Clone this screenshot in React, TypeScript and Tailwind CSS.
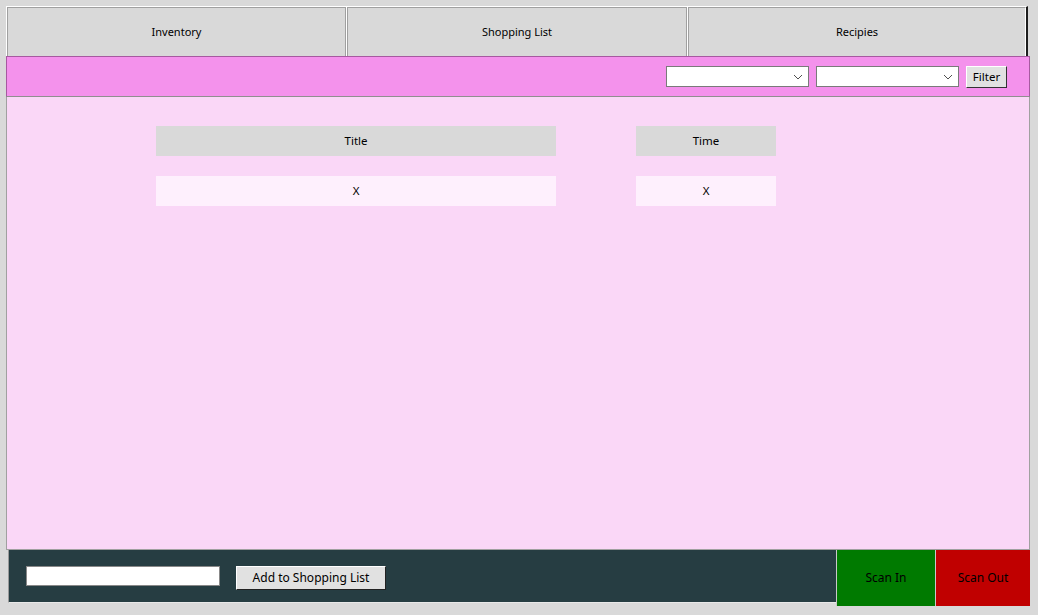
import React from 'react';

const font = { fontFamily: '"Noto Sans", "Open Sans", sans-serif' };

const Tab: React.FC<{ label: string; width: string; last?: boolean }> = ({ label, width, last }) => (
  <div className={`${width} h-full border-l border-t border-white ${last ? 'border-r-2 border-r-[#1e1e1e]' : ''}`}>
    <div className={`h-full border-l border-t border-[#a0a0a0] ${last ? 'border-r border-r-white' : 'border-r border-r-[#a0a0a0]'} bg-[#d9d9d9] flex items-center justify-center text-[11px] text-black pt-[1px]`}>
      {label}
    </div>
  </div>
);

const Select: React.FC = () => (
  <div className="w-[143px] h-[21px] bg-white border border-[#7a7a7a] flex items-center justify-end pr-[5px]">
    <svg width="10" height="6" viewBox="0 0 10 6" fill="none">
      <path d="M1 1 L5 5 L9 1" stroke="#505050" strokeWidth="1" />
    </svg>
  </div>
);

export default function App() {
  return (
    <div className="w-[1038px] h-[615px] bg-[#d9d9d9] pt-[6px] pl-[6px] overflow-hidden" style={font}>
      {/* tabs */}
      <div className="flex h-[50px]">
        <Tab label="Inventory" width="w-[340px]" />
        <Tab label="Shopping List" width="w-[341px]" />
        <Tab label="Recipies" width="w-[341px]" last />
      </div>

      {/* filter bar */}
      <div className="w-[1024px] h-[41px] bg-[#f492ec] border border-[#a65aa0] border-b-[#8f8f8f] flex items-center justify-end gap-[7px] pr-[22px]">
        <Select />
        <Select />
        <button className="w-[41px] h-[22px] bg-[#e1e1e1] border border-white border-r-[#333] border-b-[#333] text-[11.5px] text-black leading-none flex items-center justify-center mt-[1px]">
          Filter
        </button>
      </div>

      {/* content */}
      <div className="w-[1024px] h-[453px] bg-[#fad7f7] border-x border-b border-[#a0a0a0] pt-[29px] pl-[149px]">
        <div className="flex gap-[80px]">
          <div className="flex flex-col gap-[20px]">
            <div className="w-[400px] h-[30px] bg-[#d9d9d9] flex items-center justify-center text-[11.5px] text-black">Title</div>
            <div className="w-[400px] h-[30px] bg-[#fef0fd] flex items-center justify-center text-[11.5px] text-black">X</div>
          </div>
          <div className="flex flex-col gap-[20px]">
            <div className="w-[140px] h-[30px] bg-[#d9d9d9] flex items-center justify-center text-[11.5px] text-black">Time</div>
            <div className="w-[140px] h-[30px] bg-[#fef0fd] flex items-center justify-center text-[11.5px] text-black">X</div>
          </div>
        </div>
      </div>

      {/* bottom bar */}
      <div className="flex">
        <div className="ml-[2px] w-[828px] h-[53px] bg-[#263d42] border-l border-b border-[#9a9a9a] border-b-[#e8e8e8] flex items-center pl-[17px] gap-[16px] pt-[3px]">
          <div className="w-[194px] h-[20px] bg-white border border-[#888] -mt-[3px]" />
          <button className="w-[150px] h-[24px] bg-[#e1e1e1] border border-white border-r-[#222] border-b-[#222] text-[12px] text-black flex items-center justify-center">
            Add to Shopping List
          </button>
        </div>
        <div className="w-[100px] h-[56px] bg-[#007a00] border-l border-r border-[#c8c8c8] flex items-center justify-center text-[12px] text-black">
          Scan In
        </div>
        <div className="w-[94px] h-[56px] bg-[#c00000] flex items-center justify-center text-[12px] text-black">
          Scan Out
        </div>
      </div>
    </div>
  );
}
